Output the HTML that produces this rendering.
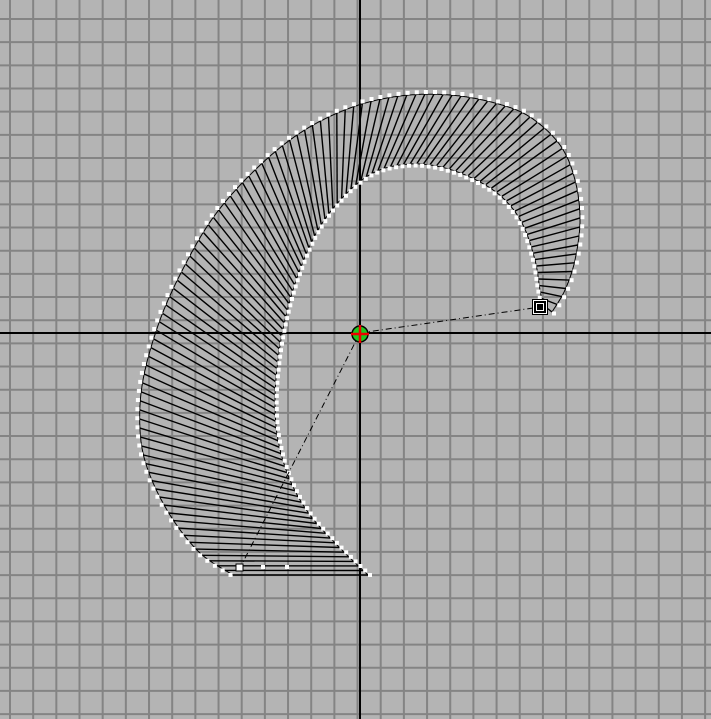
<!DOCTYPE html>
<html><head><meta charset="utf-8"><style>
html,body{margin:0;padding:0;background:#b4b4b4;width:711px;height:719px;overflow:hidden}
svg{display:block}
</style></head><body>
<svg id="s" width="711" height="719" viewBox="0 0 711 719" xmlns="http://www.w3.org/2000/svg">
<rect width="711" height="719" fill="#b4b4b4"/>
<g id="grid" stroke="#848484" stroke-width="2"></g>
<line x1="360" y1="0" x2="360" y2="719" stroke="#000" stroke-width="2"/>
<line x1="0" y1="333" x2="711" y2="333" stroke="#000" stroke-width="2"/>
<g id="shape"></g>
<line x1="360" y1="333" x2="540" y2="307" stroke="#000" stroke-width="1" stroke-dasharray="6,3,1,3"/>
<line x1="360" y1="333" x2="240" y2="568" stroke="#000" stroke-width="1" stroke-dasharray="6,3,1,3"/>
<rect x="532" y="299" width="16" height="16" fill="#000"/>
<rect x="533.5" y="300.5" width="13" height="13" fill="none" stroke="#fff" stroke-width="1"/>
<rect x="536.5" y="303.5" width="7" height="7" fill="none" stroke="#fff" stroke-width="1"/>
<rect x="236" y="564" width="7" height="7" fill="#fff" stroke="#000" stroke-width="1"/>
<circle cx="360" cy="334" r="8" fill="#1ec81e" stroke="#000" stroke-width="1.5"/>
<line x1="351" y1="334" x2="369" y2="334" stroke="#e00" stroke-width="2.5"/>
<line x1="360" y1="325" x2="360" y2="343" stroke="#e00" stroke-width="2.5"/>
</svg>
<script>
var NS="http://www.w3.org/2000/svg";
var g=document.getElementById('grid');
for(var k=-20;k<40;k++){var x=10+k*23.17;if(x>=0&&x<=711){var l=document.createElementNS(NS,'line');l.setAttribute('x1',x);l.setAttribute('x2',x);l.setAttribute('y1',0);l.setAttribute('y2',719);g.appendChild(l);}
var y=19+k*23.17;if(y>=0&&y<=719){var l=document.createElementNS(NS,'line');l.setAttribute('y1',y);l.setAttribute('y2',y);l.setAttribute('x1',0);l.setAttribute('x2',711);g.appendChild(l);}}
var outer=[[233,575],[200,553],[170,515],[148,470],[140,430],[143,380],[160,320],[185,265],[215,215],[255,170],[300,133],[350,108],[400,96],[450,95],[495,103],[530,117],[560,145],[575,180],[580,220],[575,260],[565,290],[552,312]];
var inner=[[368,575],[340,548],[310,515],[290,480],[278,440],[275,400],[278,360],[285,320],[298,275],[318,230],[345,195],[375,172],[410,164],[445,168],[480,182],[505,200],[523,225],[535,260],[540,290],[543,305]];
function cr(P){var out=[];for(var i=0;i<P.length-1;i++){var p0=P[Math.max(0,i-1)],p1=P[i],p2=P[i+1],p3=P[Math.min(P.length-1,i+2)];for(var t=0;t<1;t+=0.02){var t2=t*t,t3=t2*t;out.push([0.5*((2*p1[0])+(-p0[0]+p2[0])*t+(2*p0[0]-5*p1[0]+4*p2[0]-p3[0])*t2+(-p0[0]+3*p1[0]-3*p2[0]+p3[0])*t3),0.5*((2*p1[1])+(-p0[1]+p2[1])*t+(2*p0[1]-5*p1[1]+4*p2[1]-p3[1])*t2+(-p0[1]+3*p1[1]-3*p2[1]+p3[1])*t3)]);}}out.push(P[P.length-1]);return out;}
function resample(pts,n){var d=[0];for(var i=1;i<pts.length;i++)d.push(d[i-1]+Math.hypot(pts[i][0]-pts[i-1][0],pts[i][1]-pts[i-1][1]));var L=d[d.length-1],r=[],j=0;for(var k=0;k<n;k++){var s=L*k/(n-1);while(j<d.length-2&&d[j+1]<s)j++;var f=(s-d[j])/((d[j+1]-d[j])||1);r.push([pts[j][0]+(pts[j+1][0]-pts[j][0])*f,pts[j][1]+(pts[j+1][1]-pts[j][1])*f]);}return r;}
var oc=cr(outer),ic=cr(inner);
var N=110;var O=resample(oc,N),I=resample(ic,N);
var sh=document.getElementById('shape');var h='';
function pl(a){return a.map(function(p){return p[0].toFixed(1)+','+p[1].toFixed(1)}).join(' ');}
h+='<polyline points="'+pl(oc)+'" fill="none" stroke="#000" stroke-width="1"/>';
h+='<polyline points="'+pl(ic)+'" fill="none" stroke="#000" stroke-width="1"/>';
h+='<line x1="233" y1="575" x2="368" y2="575" stroke="#000" stroke-width="1"/>';
for(var k=0;k<N;k++){h+='<line x1="'+O[k][0].toFixed(1)+'" y1="'+O[k][1].toFixed(1)+'" x2="'+I[k][0].toFixed(1)+'" y2="'+I[k][1].toFixed(1)+'" stroke="#000" stroke-width="1.4"/>';}
function dot(p,q,sign,off){var dx=p[0]-q[0],dy=p[1]-q[1],L=Math.hypot(dx,dy)||1;var x=p[0]+sign*dx/L*off,y=p[1]+sign*dy/L*off;return '<rect x="'+(x-2).toFixed(1)+'" y="'+(y-2).toFixed(1)+'" width="4" height="4" fill="#fff"/>';}
for(var k=0;k<N;k+=1){h+=dot(O[k],I[k],1,2.5);h+=dot(I[k],O[k],1,2);}
h+='<rect x="261" y="565" width="4" height="4" fill="#fff"/><rect x="285" y="565" width="4" height="4" fill="#fff"/>';
sh.innerHTML=h;
</script>
</body></html>
